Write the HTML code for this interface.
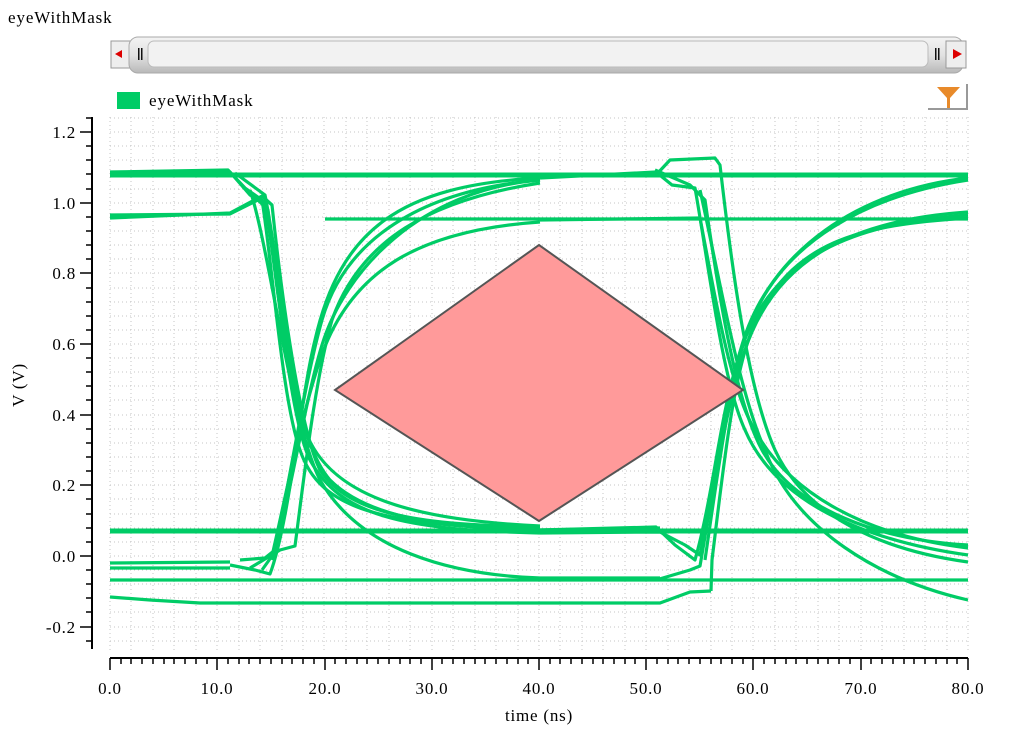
<!DOCTYPE html>
<html><head><meta charset="utf-8"><style>
body{margin:0;width:1013px;height:741px;background:#fff;overflow:hidden;font-family:"Liberation Serif",serif;}
svg{position:absolute;left:0;top:0}
</style></head><body>
<svg width="1013" height="741" xmlns="http://www.w3.org/2000/svg" font-family="Liberation Serif, serif">
<defs>
<linearGradient id="sb" x1="0" y1="0" x2="0" y2="1">
<stop offset="0" stop-color="#f4f4f4"/><stop offset="0.5" stop-color="#e2e2e2"/><stop offset="1" stop-color="#b8b8b8"/></linearGradient>
</defs>
<text x="8" y="23" font-size="17" letter-spacing="0.9">eyeWithMask</text>
<!-- scrollbar -->
<rect x="111" y="41" width="19" height="27" fill="#eee" stroke="#999"/>
<polygon points="115,54 122,50 122,58" fill="#d00"/>
<rect x="129" y="37" width="834" height="36" rx="9" fill="url(#sb)" stroke="#aaa"/>
<rect x="148" y="41" width="780" height="26" rx="6" fill="#f2f2f2" stroke="#bbb"/>
<rect x="138" y="48" width="1.5" height="12" fill="#111"/><rect x="141" y="48" width="1.5" height="12" fill="#111"/>
<rect x="935" y="48" width="1.5" height="12" fill="#111"/><rect x="938" y="48" width="1.5" height="12" fill="#111"/>
<rect x="946" y="41" width="20" height="27" fill="#eee" stroke="#999"/>
<polygon points="962,54 953,49 953,59" fill="#d00"/>
<!-- legend -->
<rect x="117" y="92" width="23" height="17" fill="#00cc66"/>
<text x="149" y="106" font-size="17" letter-spacing="0.9">eyeWithMask</text>
<!-- filter icon -->
<path d="M928,109 L967,109 L967,84" fill="none" stroke="#999" stroke-width="2"/>
<path d="M937,87 L960,87 L950,98 L950,108 L947,108 L947,98 Z" fill="#e88a2a"/>
<!-- grid -->
<g stroke="#c4c4c4" stroke-width="1" stroke-dasharray="1,3">
<line x1="110" y1="117" x2="110" y2="650"/><line x1="131" y1="117" x2="131" y2="650"/><line x1="153" y1="117" x2="153" y2="650"/><line x1="174" y1="117" x2="174" y2="650"/><line x1="196" y1="117" x2="196" y2="650"/><line x1="217" y1="117" x2="217" y2="650"/><line x1="239" y1="117" x2="239" y2="650"/><line x1="260" y1="117" x2="260" y2="650"/><line x1="282" y1="117" x2="282" y2="650"/><line x1="303" y1="117" x2="303" y2="650"/><line x1="324" y1="117" x2="324" y2="650"/><line x1="346" y1="117" x2="346" y2="650"/><line x1="367" y1="117" x2="367" y2="650"/><line x1="389" y1="117" x2="389" y2="650"/><line x1="410" y1="117" x2="410" y2="650"/><line x1="432" y1="117" x2="432" y2="650"/><line x1="453" y1="117" x2="453" y2="650"/><line x1="475" y1="117" x2="475" y2="650"/><line x1="496" y1="117" x2="496" y2="650"/><line x1="518" y1="117" x2="518" y2="650"/><line x1="539" y1="117" x2="539" y2="650"/><line x1="560" y1="117" x2="560" y2="650"/><line x1="582" y1="117" x2="582" y2="650"/><line x1="603" y1="117" x2="603" y2="650"/><line x1="625" y1="117" x2="625" y2="650"/><line x1="646" y1="117" x2="646" y2="650"/><line x1="668" y1="117" x2="668" y2="650"/><line x1="689" y1="117" x2="689" y2="650"/><line x1="711" y1="117" x2="711" y2="650"/><line x1="732" y1="117" x2="732" y2="650"/><line x1="753" y1="117" x2="753" y2="650"/><line x1="775" y1="117" x2="775" y2="650"/><line x1="796" y1="117" x2="796" y2="650"/><line x1="818" y1="117" x2="818" y2="650"/><line x1="839" y1="117" x2="839" y2="650"/><line x1="861" y1="117" x2="861" y2="650"/><line x1="882" y1="117" x2="882" y2="650"/><line x1="904" y1="117" x2="904" y2="650"/><line x1="925" y1="117" x2="925" y2="650"/><line x1="947" y1="117" x2="947" y2="650"/><line x1="968" y1="117" x2="968" y2="650"/>
</g>
<g stroke="#c4c4c4" stroke-width="1" stroke-dasharray="1,3">
<line x1="110" y1="118" x2="968" y2="118"/><line x1="110" y1="132" x2="968" y2="132"/><line x1="110" y1="146" x2="968" y2="146"/><line x1="110" y1="160" x2="968" y2="160"/><line x1="110" y1="174" x2="968" y2="174"/><line x1="110" y1="189" x2="968" y2="189"/><line x1="110" y1="203" x2="968" y2="203"/><line x1="110" y1="217" x2="968" y2="217"/><line x1="110" y1="231" x2="968" y2="231"/><line x1="110" y1="245" x2="968" y2="245"/><line x1="110" y1="259" x2="968" y2="259"/><line x1="110" y1="273" x2="968" y2="273"/><line x1="110" y1="288" x2="968" y2="288"/><line x1="110" y1="302" x2="968" y2="302"/><line x1="110" y1="316" x2="968" y2="316"/><line x1="110" y1="330" x2="968" y2="330"/><line x1="110" y1="344" x2="968" y2="344"/><line x1="110" y1="358" x2="968" y2="358"/><line x1="110" y1="372" x2="968" y2="372"/><line x1="110" y1="386" x2="968" y2="386"/><line x1="110" y1="400" x2="968" y2="400"/><line x1="110" y1="415" x2="968" y2="415"/><line x1="110" y1="429" x2="968" y2="429"/><line x1="110" y1="443" x2="968" y2="443"/><line x1="110" y1="457" x2="968" y2="457"/><line x1="110" y1="471" x2="968" y2="471"/><line x1="110" y1="485" x2="968" y2="485"/><line x1="110" y1="499" x2="968" y2="499"/><line x1="110" y1="514" x2="968" y2="514"/><line x1="110" y1="528" x2="968" y2="528"/><line x1="110" y1="542" x2="968" y2="542"/><line x1="110" y1="556" x2="968" y2="556"/><line x1="110" y1="570" x2="968" y2="570"/><line x1="110" y1="584" x2="968" y2="584"/><line x1="110" y1="598" x2="968" y2="598"/><line x1="110" y1="612" x2="968" y2="612"/><line x1="110" y1="627" x2="968" y2="627"/><line x1="110" y1="641" x2="968" y2="641"/>
</g>
<!-- traces -->
<g fill="none" stroke="#00cc66" stroke-width="3.2" stroke-linejoin="round">
<line x1="110" y1="175" x2="968" y2="175" stroke-width="5"/>
<line x1="110" y1="531" x2="968" y2="531" stroke-width="5"/>
<line x1="110" y1="580" x2="968" y2="580"/>
<line x1="325" y1="219" x2="968" y2="219"/>
<path d="M110,597 L150,600 L200,603 L660,603 L690,592 L711,591"/>
<path d="M110,568 L230,568"/>
<path d="M110,563 L230,562"/>
<path d="M110,172 L228,170 L245,188 L262,200 C272,260 282,400 300,450 C320,510 380,525 540,530 L660,528"/>
<path d="M110,175 L230,172 L250,195 L265,202 C278,280 290,420 310,460 C340,515 400,530 540,533"/>
<path d="M110,218 L230,213 L262,196 L272,205 C282,300 300,430 320,470 C350,515 420,525 540,527"/>
<path d="M110,215 L230,214 L258,200 L268,210 C280,320 295,440 330,480 C370,520 450,528 540,530"/>
<path d="M235,173 L265,195 C278,260 290,380 305,430 C330,500 420,520 540,526"/>
<path d="M250,190 C270,250 290,420 320,480 C360,550 450,575 540,578 L660,578"/>
<path d="M230,565 L255,570 L270,574 C290,520 300,400 315,340 C340,230 400,185 540,178"/>
<path d="M240,560 L265,558 L275,550 C290,480 305,380 322,320 C345,240 420,190 540,180"/>
<path d="M250,568 L280,550 L295,546 C305,470 315,380 332,320 C360,240 430,200 540,183"/>
<path d="M262,570 L272,556 C285,500 300,420 320,360 C350,270 420,230 540,222"/>
<path d="M272,560 C290,500 305,400 322,345 C345,270 420,190 540,180"/>
<path d="M540,178 L656,172 L672,185 L695,188 C708,260 722,380 745,430 C775,500 860,540 968,555"/>
<path d="M540,176 L656,175 L670,160 L715,158 L720,165 C732,270 748,390 775,450 C805,515 880,550 968,562"/>
<path d="M655,170 L690,185 L705,200 C718,290 735,400 762,450 C795,510 880,540 968,545"/>
<path d="M540,220 L700,218 C714,290 728,380 752,425 C785,490 860,535 968,548"/>
<path d="M700,190 C718,270 738,390 765,450 C795,530 880,580 968,600"/>
<path d="M540,530 L656,527 L675,545 L695,560 C712,500 720,420 735,370 C760,270 830,225 968,215"/>
<path d="M540,533 L660,532 L685,545 L700,555 C715,480 728,400 745,350 C775,260 850,220 968,212"/>
<path d="M656,580 L690,570 L700,566 C715,480 725,400 742,345 C770,250 860,190 968,178"/>
<path d="M711,591 L712,560 C722,480 732,380 752,330 C790,240 860,225 968,218"/>
<path d="M705,560 C718,470 730,380 748,330 C780,240 870,195 968,180"/>
</g>
<!-- mask -->
<polygon points="335,390 539,245 743,390 539,521" fill="#ff9a9a" stroke="#555" stroke-width="2"/>
<!-- axes -->
<g stroke="#000" stroke-width="2" fill="none">
<line x1="92" y1="117" x2="92" y2="649"/>
<line x1="110" y1="658" x2="968" y2="658"/>
</g>
<g stroke="#000" stroke-width="1.5">
<line x1="86" y1="118" x2="92" y2="118"/><line x1="80" y1="132" x2="92" y2="132"/><line x1="86" y1="146" x2="92" y2="146"/><line x1="86" y1="160" x2="92" y2="160"/><line x1="86" y1="174" x2="92" y2="174"/><line x1="86" y1="189" x2="92" y2="189"/><line x1="80" y1="203" x2="92" y2="203"/><line x1="86" y1="217" x2="92" y2="217"/><line x1="86" y1="231" x2="92" y2="231"/><line x1="86" y1="245" x2="92" y2="245"/><line x1="86" y1="259" x2="92" y2="259"/><line x1="80" y1="273" x2="92" y2="273"/><line x1="86" y1="288" x2="92" y2="288"/><line x1="86" y1="302" x2="92" y2="302"/><line x1="86" y1="316" x2="92" y2="316"/><line x1="86" y1="330" x2="92" y2="330"/><line x1="80" y1="344" x2="92" y2="344"/><line x1="86" y1="358" x2="92" y2="358"/><line x1="86" y1="372" x2="92" y2="372"/><line x1="86" y1="386" x2="92" y2="386"/><line x1="86" y1="400" x2="92" y2="400"/><line x1="80" y1="415" x2="92" y2="415"/><line x1="86" y1="429" x2="92" y2="429"/><line x1="86" y1="443" x2="92" y2="443"/><line x1="86" y1="457" x2="92" y2="457"/><line x1="86" y1="471" x2="92" y2="471"/><line x1="80" y1="485" x2="92" y2="485"/><line x1="86" y1="499" x2="92" y2="499"/><line x1="86" y1="514" x2="92" y2="514"/><line x1="86" y1="528" x2="92" y2="528"/><line x1="86" y1="542" x2="92" y2="542"/><line x1="80" y1="556" x2="92" y2="556"/><line x1="86" y1="570" x2="92" y2="570"/><line x1="86" y1="584" x2="92" y2="584"/><line x1="86" y1="598" x2="92" y2="598"/><line x1="86" y1="612" x2="92" y2="612"/><line x1="80" y1="627" x2="92" y2="627"/><line x1="86" y1="641" x2="92" y2="641"/>
</g>
<g stroke="#000" stroke-width="1.5">
<line x1="110" y1="658" x2="110" y2="670"/><line x1="121" y1="658" x2="121" y2="664"/><line x1="131" y1="658" x2="131" y2="664"/><line x1="142" y1="658" x2="142" y2="664"/><line x1="153" y1="658" x2="153" y2="664"/><line x1="164" y1="658" x2="164" y2="664"/><line x1="174" y1="658" x2="174" y2="664"/><line x1="185" y1="658" x2="185" y2="664"/><line x1="196" y1="658" x2="196" y2="664"/><line x1="207" y1="658" x2="207" y2="664"/>
<line x1="217" y1="658" x2="217" y2="670"/><line x1="228" y1="658" x2="228" y2="664"/><line x1="239" y1="658" x2="239" y2="664"/><line x1="249" y1="658" x2="249" y2="664"/><line x1="260" y1="658" x2="260" y2="664"/><line x1="271" y1="658" x2="271" y2="664"/><line x1="282" y1="658" x2="282" y2="664"/><line x1="292" y1="658" x2="292" y2="664"/><line x1="303" y1="658" x2="303" y2="664"/><line x1="314" y1="658" x2="314" y2="664"/>
<line x1="325" y1="658" x2="325" y2="670"/><line x1="335" y1="658" x2="335" y2="664"/><line x1="346" y1="658" x2="346" y2="664"/><line x1="357" y1="658" x2="357" y2="664"/><line x1="367" y1="658" x2="367" y2="664"/><line x1="378" y1="658" x2="378" y2="664"/><line x1="389" y1="658" x2="389" y2="664"/><line x1="400" y1="658" x2="400" y2="664"/><line x1="410" y1="658" x2="410" y2="664"/><line x1="421" y1="658" x2="421" y2="664"/>
<line x1="432" y1="658" x2="432" y2="670"/><line x1="442" y1="658" x2="442" y2="664"/><line x1="453" y1="658" x2="453" y2="664"/><line x1="464" y1="658" x2="464" y2="664"/><line x1="475" y1="658" x2="475" y2="664"/><line x1="485" y1="658" x2="485" y2="664"/><line x1="496" y1="658" x2="496" y2="664"/><line x1="507" y1="658" x2="507" y2="664"/><line x1="518" y1="658" x2="518" y2="664"/><line x1="528" y1="658" x2="528" y2="664"/>
<line x1="539" y1="658" x2="539" y2="670"/><line x1="550" y1="658" x2="550" y2="664"/><line x1="560" y1="658" x2="560" y2="664"/><line x1="571" y1="658" x2="571" y2="664"/><line x1="582" y1="658" x2="582" y2="664"/><line x1="593" y1="658" x2="593" y2="664"/><line x1="603" y1="658" x2="603" y2="664"/><line x1="614" y1="658" x2="614" y2="664"/><line x1="625" y1="658" x2="625" y2="664"/><line x1="635" y1="658" x2="635" y2="664"/>
<line x1="646" y1="658" x2="646" y2="670"/><line x1="657" y1="658" x2="657" y2="664"/><line x1="668" y1="658" x2="668" y2="664"/><line x1="678" y1="658" x2="678" y2="664"/><line x1="689" y1="658" x2="689" y2="664"/><line x1="700" y1="658" x2="700" y2="664"/><line x1="711" y1="658" x2="711" y2="664"/><line x1="721" y1="658" x2="721" y2="664"/><line x1="732" y1="658" x2="732" y2="664"/><line x1="743" y1="658" x2="743" y2="664"/>
<line x1="753" y1="658" x2="753" y2="670"/><line x1="764" y1="658" x2="764" y2="664"/><line x1="775" y1="658" x2="775" y2="664"/><line x1="786" y1="658" x2="786" y2="664"/><line x1="796" y1="658" x2="796" y2="664"/><line x1="807" y1="658" x2="807" y2="664"/><line x1="818" y1="658" x2="818" y2="664"/><line x1="828" y1="658" x2="828" y2="664"/><line x1="839" y1="658" x2="839" y2="664"/><line x1="850" y1="658" x2="850" y2="664"/>
<line x1="861" y1="658" x2="861" y2="670"/><line x1="871" y1="658" x2="871" y2="664"/><line x1="882" y1="658" x2="882" y2="664"/><line x1="893" y1="658" x2="893" y2="664"/><line x1="904" y1="658" x2="904" y2="664"/><line x1="914" y1="658" x2="914" y2="664"/><line x1="925" y1="658" x2="925" y2="664"/><line x1="936" y1="658" x2="936" y2="664"/><line x1="947" y1="658" x2="947" y2="664"/><line x1="957" y1="658" x2="957" y2="664"/>
<line x1="968" y1="658" x2="968" y2="670"/>
</g>
<g font-size="17" text-anchor="end" letter-spacing="0.8">
<text x="76" y="138">1.2</text><text x="76" y="209">1.0</text><text x="76" y="279">0.8</text><text x="76" y="350">0.6</text><text x="76" y="421">0.4</text><text x="76" y="491">0.2</text><text x="76" y="562">0.0</text><text x="76" y="633">-0.2</text>
</g>
<g font-size="17" text-anchor="middle" letter-spacing="0.8">
<text x="110" y="694">0.0</text><text x="217" y="694">10.0</text><text x="325" y="694">20.0</text><text x="432" y="694">30.0</text><text x="539" y="694">40.0</text><text x="646" y="694">50.0</text><text x="753" y="694">60.0</text><text x="861" y="694">70.0</text><text x="968" y="694">80.0</text>
<text x="539" y="721">time (ns)</text>
<text transform="translate(24,385) rotate(-90)">V (V)</text>
</g>
</svg>
</body></html>
